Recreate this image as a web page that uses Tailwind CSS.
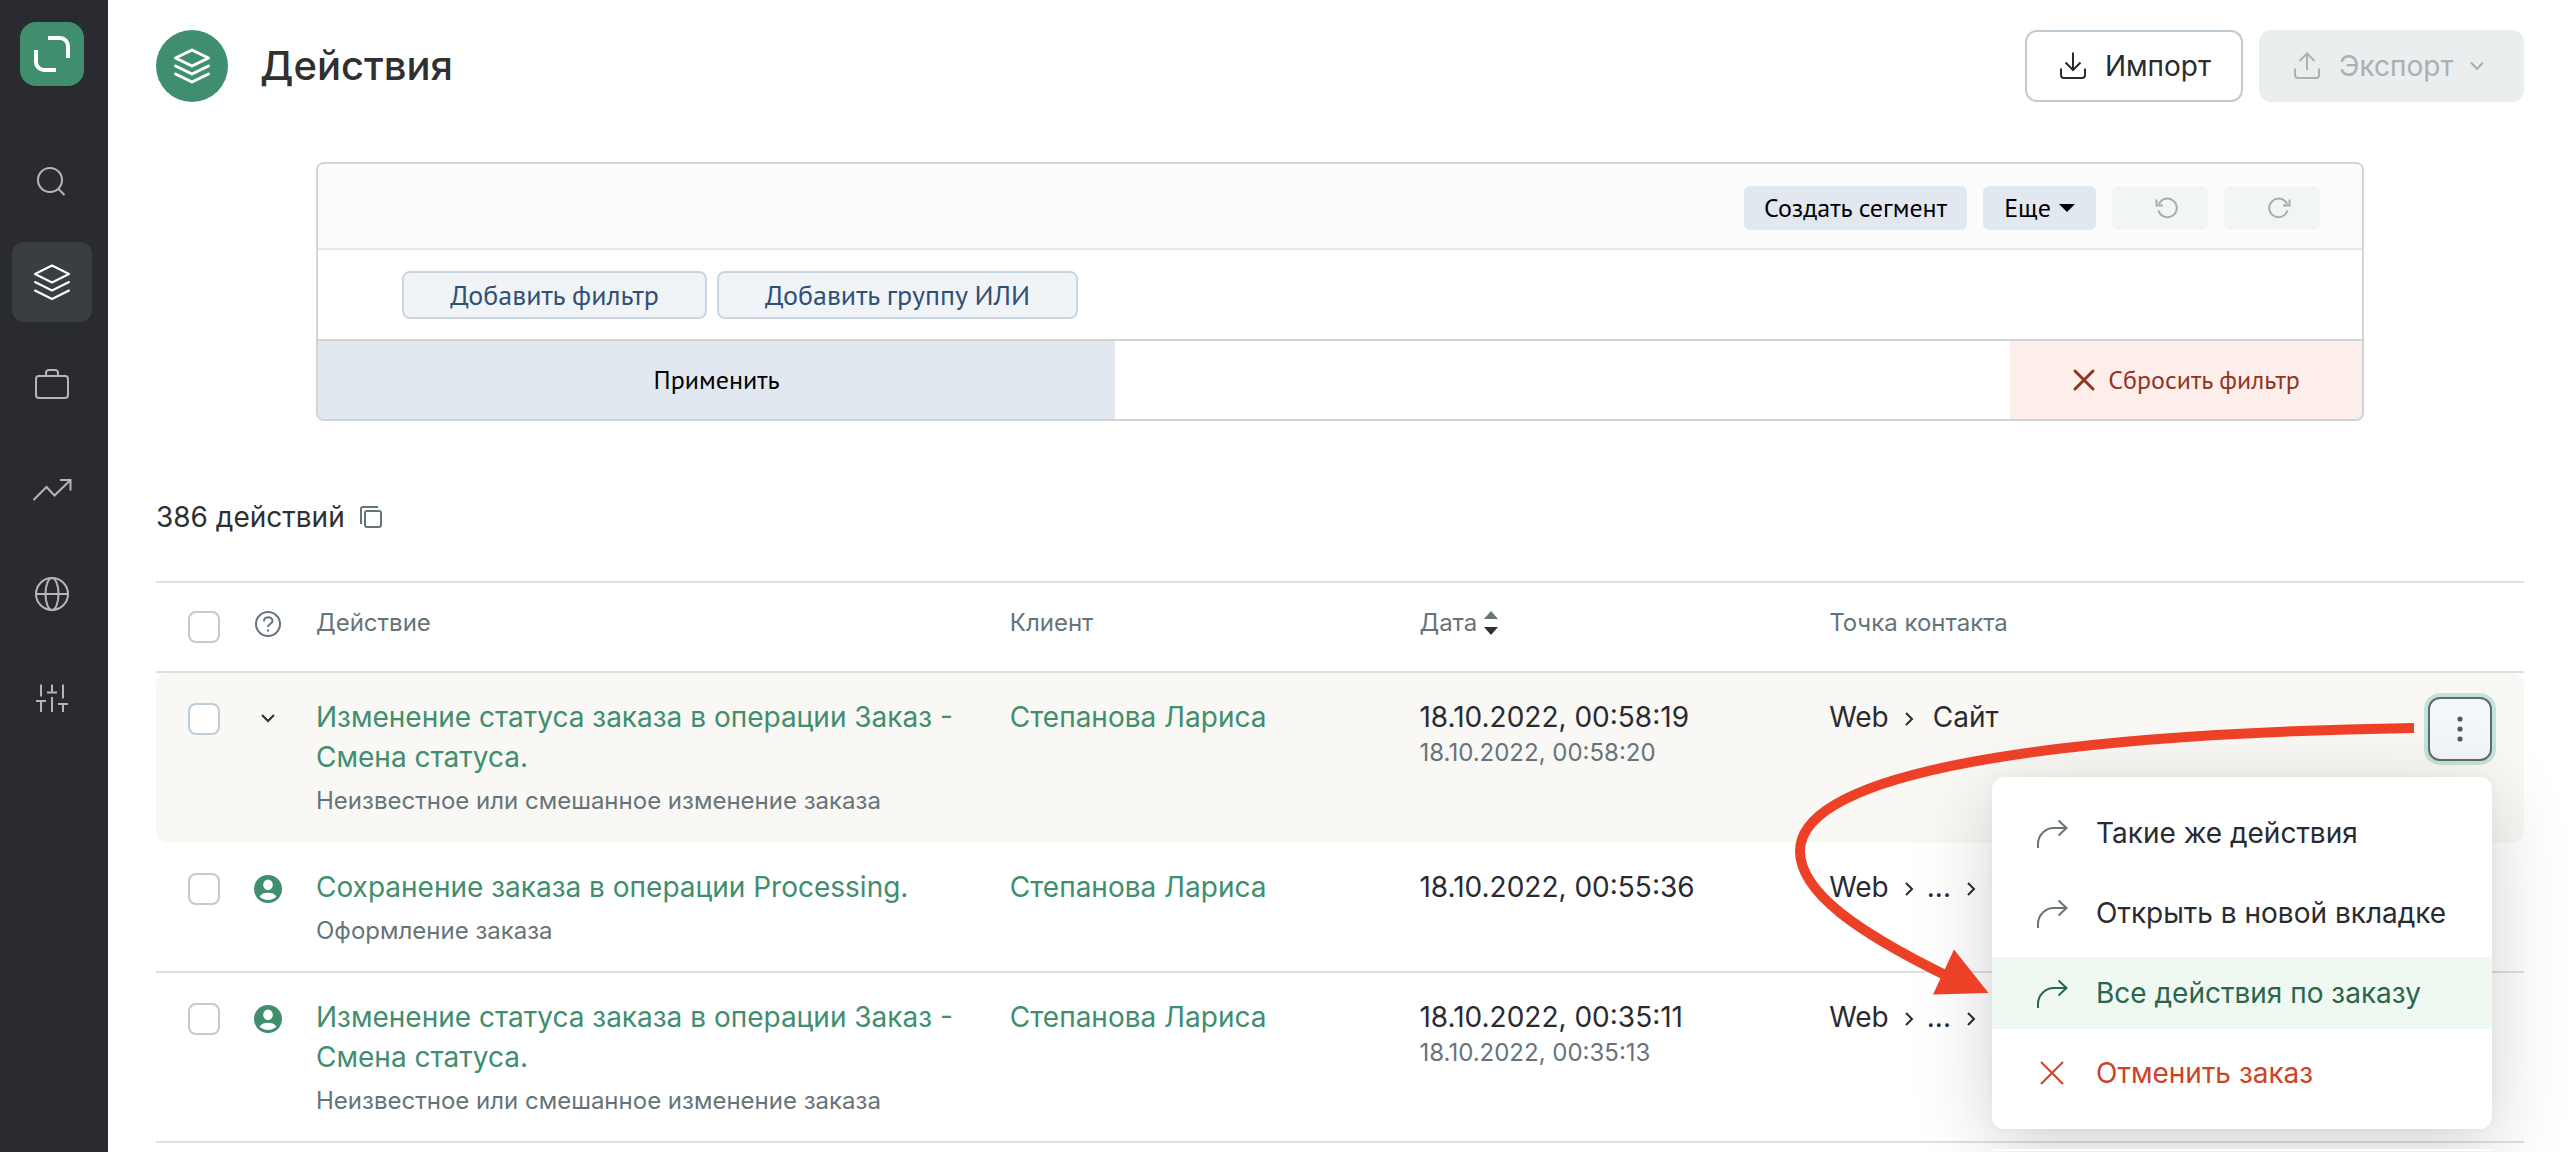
<!DOCTYPE html>
<html lang="ru">
<head>
<meta charset="utf-8">
<meta name="viewport" content="width=device-width, initial-scale=1">
<title>Действия</title>
<script src="https://cdn.jsdelivr.net/npm/@tailwindcss/browser@4"></script>
</head>
<body class="bg-white font-['Inter',sans-serif] text-[28px] leading-10 text-[#2a2b30]">
<div class="flex min-h-screen">

  <aside class="w-[108px] shrink-0 bg-[#2a2b30] pt-[22px]">
    <a href="#" aria-label="Главная" class="ml-5 block size-16 rounded-2xl bg-[#3f8e6d]">
      <svg class="size-16" viewBox="0 0 64 64" fill="none" stroke="#fff" stroke-width="4"><path d="M28 16h12a8 8 0 0 1 8 8v12M16 28v12a8 8 0 0 0 8 8h12"/></svg>
    </a>
    <nav class="ml-3 mt-[52px] flex w-20 flex-col gap-6 text-[#b4b6b9]" aria-label="Разделы">
      <a href="#" aria-label="Поиск" class="flex size-20 items-center justify-center rounded-xl">
        <svg class="size-10" viewBox="0 0 40 40" fill="none" stroke="currentColor" stroke-width="2"><circle cx="18" cy="22" r="12"/><path d="m26.5 31 6 6"/></svg>
      </a>
      <a href="#" aria-label="Действия" aria-current="page" class="flex size-20 items-center justify-center rounded-xl bg-[#3a3d42] text-white">
        <svg class="size-10" viewBox="0 0 40 40" fill="none" stroke="currentColor" stroke-width="2" stroke-linejoin="round" stroke-linecap="round"><path d="m20 3.500 17 8.500-17 8.500L3 12zM3 20l17 8.500L37 20M3 28.500 20 37l17-8.500"/></svg>
      </a>
      <a href="#" aria-label="Продажи" class="flex size-20 items-center justify-center rounded-xl">
        <svg class="size-10" viewBox="0 0 40 40" fill="none" stroke="currentColor" stroke-width="2"><rect x="4" y="10" width="32" height="22" rx="3"/><path d="M14 10V7a3 3 0 0 1 3-3h6a3 3 0 0 1 3 3v3"/></svg>
      </a>
      <a href="#" aria-label="Аналитика" class="flex size-20 items-center justify-center rounded-xl">
        <svg class="size-10" viewBox="0 0 40 40" fill="none" stroke="currentColor" stroke-width="2"><path d="m1.500 30 13-13 8 8.500L38.500 10M28 10h10.500v10.500"/></svg>
      </a>
      <a href="#" aria-label="Сайт" class="flex size-20 items-center justify-center rounded-xl">
        <svg class="size-10" viewBox="0 0 40 40" fill="none" stroke="currentColor" stroke-width="2"><circle cx="20" cy="20" r="16"/><ellipse cx="20" cy="20" rx="6.500" ry="16"/><path d="M4 20h32"/></svg>
      </a>
      <a href="#" aria-label="Настройки" class="flex size-20 items-center justify-center rounded-xl">
        <svg class="size-10" viewBox="0 0 40 40" fill="none" stroke="currentColor" stroke-width="2"><path d="M9 6.500v12M9 23v11M4 23h10M20 6.500v8M15 14.500h10M20 19v15M31 6.500v14M31 26v8M26 26h10"/></svg>
      </a>
    </nav>
  </aside>

  <main class="min-w-0 grow px-12 pt-[30px]">
    <header class="flex h-[72px] items-center">
      <div class="flex size-[72px] items-center justify-center rounded-full bg-[#3f8e6d] text-white">
        <svg class="size-10" viewBox="0 0 40 40" fill="none" stroke="currentColor" stroke-width="3" stroke-linejoin="round" stroke-linecap="round"><path d="m20 4 16.500 8L20 20 3.500 12zM3.500 20 20 28l16.500-8M3.500 28 20 36l16.500-8"/></svg>
      </div>
      <h1 class="ml-8 text-[40px] font-medium leading-[48px] text-[#303030]">Действия</h1>
      <button type="button" class="ml-auto flex h-[72px] w-[218px] items-center justify-center gap-4 rounded-xl border-2 border-[#bfcbd5] bg-white">
        <svg class="size-8" viewBox="0 0 32 32" fill="none" stroke="currentColor" stroke-width="2"><path d="M16 2.500V20M8.500 12.500 16 20l7.500-7.500M4 18.500V25a3 3 0 0 0 3 3h18a3 3 0 0 0 3-3v-6.500"/></svg>
        Импорт
      </button>
      <button type="button" disabled class="ml-4 flex h-[72px] w-[265px] items-center gap-4 rounded-xl bg-[#ebeeef] pl-8 text-[#adafb1]">
        <svg class="size-8" viewBox="0 0 32 32" fill="none" stroke="currentColor" stroke-width="2"><path d="M16 20V3.500M8.500 11 16 3.500 23.500 11M4 18.500V25a3 3 0 0 0 3 3h18a3 3 0 0 0 3-3v-6.500"/></svg>
        Экспорт
        <svg class="size-4" viewBox="0 0 16 16" fill="none" stroke="currentColor" stroke-width="2"><path d="m2 4.500 6 6.500 6-6.500"/></svg>
      </button>
    </header>

    <section class="mx-40 mt-[60px] overflow-hidden rounded-lg border-2 border-[#d2d3d4] font-['PT_Sans','Noto_Sans',sans-serif] text-[26px]" aria-label="Фильтр">
      <div class="flex h-[86px] items-center justify-end gap-4 border-b-2 border-[#e3e8ec] bg-[#fcfcfc] pr-[42px] pt-1 text-black">
        <button type="button" class="h-11 w-[223px] rounded-md bg-[#e2e8ef]">Создать сегмент</button>
        <button type="button" class="flex h-11 w-[113px] items-center justify-center gap-2 rounded-md bg-[#e2e8ef]">Еще
          <svg class="h-2 w-4" viewBox="0 0 16 8"><path d="M0 0h16L8 8z"/></svg>
        </button>
        <button type="button" disabled aria-label="Отменить" class="flex h-11 w-24 items-center justify-end rounded-md bg-[#f2f5f6] pr-[29px] text-[#aaa]">
          <svg class="size-6" viewBox="0 0 24 24" fill="none" stroke="currentColor" stroke-width="2"><path d="M3.500 14.500a9.300 9.300 0 1 0 .5-6.500M1.500 3.500v6h6.500"/></svg>
        </button>
        <button type="button" disabled aria-label="Повторить" class="flex h-11 w-24 items-center justify-end rounded-md bg-[#f2f5f6] pr-[29px] text-[#aaa]">
          <svg class="size-6" viewBox="0 0 24 24" fill="none" stroke="currentColor" stroke-width="2"><path d="M20.500 14.500a9.300 9.300 0 1 1-.5-6.500M22.500 3.500v6h-6.500"/></svg>
        </button>
      </div>
      <div class="flex h-[91px] items-center gap-[10px] border-b-2 border-[#d2d3d4] pl-[84px] text-[28px] text-[#2f5175]">
        <button type="button" class="h-12 w-[305px] rounded-lg border-2 border-[#c9d5e0] bg-[#f1f4f7]">Добавить фильтр</button>
        <button type="button" class="h-12 w-[361px] rounded-lg border-2 border-[#c9d5e0] bg-[#f1f4f7]">Добавить группу ИЛИ</button>
      </div>
      <div class="flex h-[78px] justify-between">
        <button type="button" class="w-[39%] bg-[#e2e8ef] text-black">Применить</button>
        <button type="button" class="flex w-[352px] items-center justify-center gap-3 bg-[#fdeeeb] text-[#93341f]">
          <svg class="size-6" viewBox="0 0 24 24" fill="none" stroke="currentColor" stroke-width="3" stroke-linecap="round"><path d="m3 3 18 18M21 3 3 21"/></svg>
          Сбросить фильтр
        </button>
      </div>
    </section>

    <div class="mt-[76px] flex h-10 items-center gap-3.5 text-[#303030]">
      <span>386 действий</span>
      <button type="button" aria-label="Копировать" class="text-[#667479]">
        <svg class="size-6" viewBox="0 0 24 24" fill="none" stroke="currentColor" stroke-width="2"><rect x="6" y="6" width="16" height="16" rx="2"/><path d="M2 19V4a2 2 0 0 1 2-2h15"/></svg>
      </button>
    </div>

    <table class="mt-11 w-full table-fixed border-separate border-spacing-0 border-t-2 border-[#dbe0e5]">
      <colgroup>
        <col class="w-[92px]"><col class="w-[68px]"><col class="w-[29.3%]"><col class="w-[17.3%]"><col class="w-[17.3%]"><col>
      </colgroup>
      <thead>
        <tr class="text-left text-2xl leading-8 text-[#667479] *:border-b-2 *:border-[#dbe0e5] *:align-top *:font-normal">
          <th scope="col" class="py-7 pl-8"><input type="checkbox" aria-label="Выбрать все" class="block size-8 appearance-none rounded-lg border-2 border-[#bfcbd5] bg-white"></th>
          <th scope="col" class="pl-[6px] pt-7"><svg class="size-7" viewBox="0 0 28 28" fill="none" stroke="currentColor" stroke-width="2" role="img" aria-label="Справка"><circle cx="14" cy="13" r="12"/><path d="M10 10.500c0-5.500 8.500-5.500 8.500-.5 0 3-4.500 3-4.500 6"/><path d="M14 18.500v2"/></svg></th>
          <th scope="col" class="pt-6">Действие</th>
          <th scope="col" class="pt-6">Клиент</th>
          <th scope="col" class="pt-6"><span class="flex items-center gap-[6px]">Дата<svg class="h-6 w-4" viewBox="0 0 16 24"><path fill="#667479" d="M8 0l7 8H1z"/><path fill="#303030" d="M8 24l7-8H1z"/></svg></span></th>
          <th scope="col" class="pt-6">Точка контакта</th>
        </tr>
      </thead>
      <tbody>
        <tr class="*:border-b-2 *:border-[#f9f8f4] *:bg-[#f9f8f4] *:align-top *:py-6">
          <td class="rounded-l-xl pl-8"><input type="checkbox" aria-label="Выбрать действие" class="mt-[6px] block size-8 appearance-none rounded-lg border-2 border-[#bfcbd5] bg-white"></td>
          <td class="pl-3"><svg class="mt-3 size-4" viewBox="0 0 16 16" fill="none" stroke="currentColor" stroke-width="2"><path d="m2 6 6 6 6-6"/></svg></td>
          <td class="pr-6">
            <a href="#" class="block text-[#3f8e6d]">Изменение статуса заказа в операции Заказ - Смена статуса.</a>
            <p class="mt-2 text-2xl leading-8 text-[#667479]">Неизвестное или смешанное изменение заказа</p>
          </td>
          <td><a href="#" class="text-[#3f8e6d]">Степанова Лариса</a></td>
          <td>18.10.2022, 00:58:19<p class="text-2xl leading-8 text-[#667479]">18.10.2022, 00:58:20</p></td>
          <td class="rounded-r-xl pr-8">
            <div class="flex h-10 items-start justify-between">
              <div class="flex items-center">Web<svg class="ml-[14px] mr-3 mt-1 h-4 w-3" viewBox="0 0 12 16" fill="none" stroke="currentColor" stroke-width="2"><path d="m3 2 6 6-6 6"/></svg><span class="ml-[6px]">Сайт</span></div>
              <div class="relative">
                <button type="button" aria-label="Меню действия" aria-expanded="true" class="flex size-16 items-center justify-center rounded-xl border-2 border-[#5f6b70] bg-[#f4f7f9] ring-4 ring-[#c3e4d7]">
                  <svg class="size-8" viewBox="0 0 32 32" fill="#54595d"><circle cx="16" cy="6" r="2.600"/><circle cx="16" cy="16" r="2.600"/><circle cx="16" cy="26" r="2.600"/></svg>
                </button>
                <div class="absolute right-0 top-full z-10 mt-4 w-[500px]">
                  <div role="menu" class="flex flex-col gap-2 rounded-xl bg-white py-5 shadow-[0_20px_80px_rgba(0,0,0,0.18),0_0_8px_rgba(0,0,0,0.04)]">
                    <button type="button" role="menuitem" class="flex h-[72px] items-center gap-7 pl-11">
                      <svg class="size-8 text-[#667479]" viewBox="0 0 32 32" fill="none" stroke="currentColor" stroke-width="2"><path d="M2 31v-4A16 16 0 0 1 18 11h12M22.500 3.500 30.500 11l-8 7.500"/></svg>Такие же действия</button>
                    <button type="button" role="menuitem" class="flex h-[72px] items-center gap-7 pl-11">
                      <svg class="size-8 text-[#667479]" viewBox="0 0 32 32" fill="none" stroke="currentColor" stroke-width="2"><path d="M2 31v-4A16 16 0 0 1 18 11h12M22.500 3.500 30.500 11l-8 7.500"/></svg>Открыть в новой вкладке</button>
                    <button type="button" role="menuitem" class="flex h-[72px] items-center gap-7 bg-[#eff9f2] pl-11 text-[#2a664d]">
                      <svg class="size-8" viewBox="0 0 32 32" fill="none" stroke="currentColor" stroke-width="2"><path d="M2 31v-4A16 16 0 0 1 18 11h12M22.500 3.500 30.500 11l-8 7.500"/></svg>Все действия по заказу</button>
                    <button type="button" role="menuitem" class="flex h-[72px] items-center gap-7 pl-11 text-[#cd4326]">
                      <svg class="size-8" viewBox="0 0 32 32" fill="none" stroke="currentColor" stroke-width="2"><path d="m5 5 22 22M27 5 5 27"/></svg>Отменить заказ</button>
                  </div>
                  <div class="absolute inset-x-0 top-full mt-5 h-[2px] bg-white"></div>
                </div>
                <svg class="pointer-events-none absolute right-[76px] top-[23px] z-20 h-[280px] w-[626px]" viewBox="0 0 626 280" fill="none" aria-hidden="true">
                  <path d="M624 8C260 14 10 52 10 131c0 42 60 82 145 124" stroke="#ec4126" stroke-width="10"/>
                  <path d="M164 229.500 198.500 273l-55.500 1.500z" fill="#ec4126"/>
                </svg>
              </div>
            </div>
          </td>
        </tr>
        <tr class="*:border-b-2 *:border-[#dbe0e5] *:align-top *:py-6">
          <td class="pl-8"><input type="checkbox" aria-label="Выбрать действие" class="mt-[6px] block size-8 appearance-none rounded-lg border-2 border-[#bfcbd5] bg-white"></td>
          <td class="pl-[6px]"><svg class="mt-2 size-7" viewBox="0 0 28 28"><circle cx="14" cy="14" r="14" fill="#3f8e6d"/><ellipse cx="14" cy="9.800" rx="4.800" ry="5.300" fill="#fff"/><path d="M5.500 21.500c2-3 5-3.800 8.500-3.800s6.500.8 8.500 3.800c-2 2.200-5 3.500-8.500 3.500s-6.500-1.300-8.500-3.500z" fill="#fff"/></svg></td>
          <td class="pr-6">
            <a href="#" class="block text-[#3f8e6d]">Сохранение заказа в операции Processing.</a>
            <p class="mt-2 text-2xl leading-8 text-[#667479]">Оформление заказа</p>
          </td>
          <td><a href="#" class="text-[#3f8e6d]">Степанова Лариса</a></td>
          <td>18.10.2022, 00:55:36</td>
          <td><div class="flex items-center">Web<svg class="ml-[14px] mr-3 mt-1 h-4 w-3" viewBox="0 0 12 16" fill="none" stroke="currentColor" stroke-width="2"><path d="m3 2 6 6-6 6"/></svg>...<svg class="ml-[14px] mr-3 mt-1 h-4 w-3" viewBox="0 0 12 16" fill="none" stroke="currentColor" stroke-width="2"><path d="m3 2 6 6-6 6"/></svg></div></td>
        </tr>
        <tr class="*:border-b-2 *:border-[#dbe0e5] *:align-top *:py-6">
          <td class="pl-8"><input type="checkbox" aria-label="Выбрать действие" class="mt-[6px] block size-8 appearance-none rounded-lg border-2 border-[#bfcbd5] bg-white"></td>
          <td class="pl-[6px]"><svg class="mt-2 size-7" viewBox="0 0 28 28"><circle cx="14" cy="14" r="14" fill="#3f8e6d"/><ellipse cx="14" cy="9.800" rx="4.800" ry="5.300" fill="#fff"/><path d="M5.500 21.500c2-3 5-3.800 8.500-3.800s6.500.8 8.500 3.800c-2 2.200-5 3.500-8.500 3.500s-6.500-1.300-8.500-3.500z" fill="#fff"/></svg></td>
          <td class="pr-6">
            <a href="#" class="block text-[#3f8e6d]">Изменение статуса заказа в операции Заказ - Смена статуса.</a>
            <p class="mt-2 text-2xl leading-8 text-[#667479]">Неизвестное или смешанное изменение заказа</p>
          </td>
          <td><a href="#" class="text-[#3f8e6d]">Степанова Лариса</a></td>
          <td>18.10.2022, 00:35:11<p class="text-2xl leading-8 text-[#667479]">18.10.2022, 00:35:13</p></td>
          <td><div class="flex items-center">Web<svg class="ml-[14px] mr-3 mt-1 h-4 w-3" viewBox="0 0 12 16" fill="none" stroke="currentColor" stroke-width="2"><path d="m3 2 6 6-6 6"/></svg>...<svg class="ml-[14px] mr-3 mt-1 h-4 w-3" viewBox="0 0 12 16" fill="none" stroke="currentColor" stroke-width="2"><path d="m3 2 6 6-6 6"/></svg></div></td>
        </tr>
      </tbody>
    </table>
  </main>
</div>
</body>
</html>
